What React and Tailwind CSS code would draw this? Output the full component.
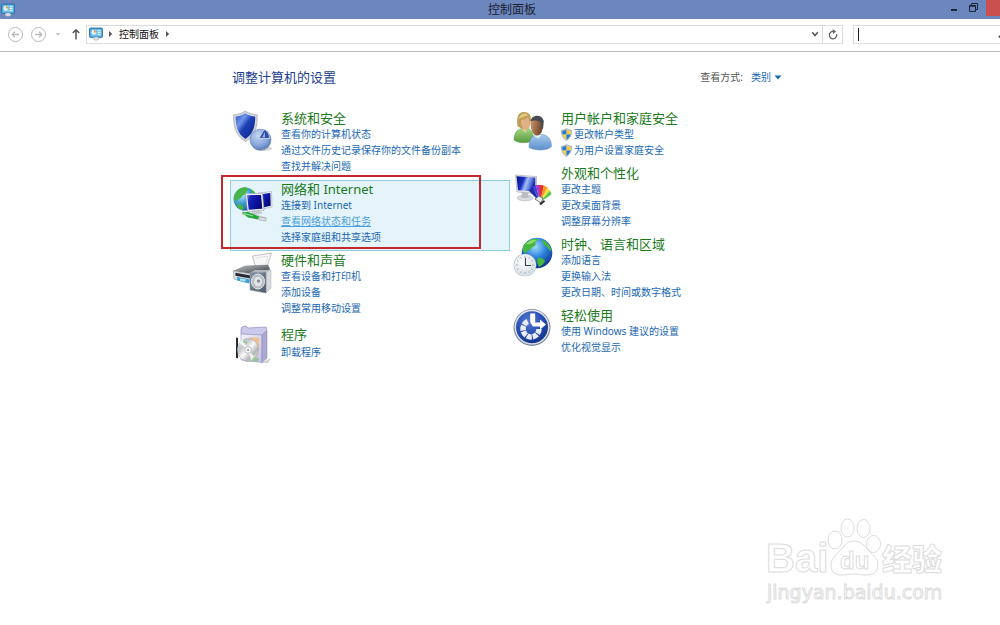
import React from "react";

function ControlPanelIcon({ className }) {
  return (
    <svg viewBox="0 0 14 14" className={className} aria-hidden="true">
      <rect x="0.5" y="1" width="13" height="9.5" rx="1" fill="#3f93cf" stroke="#2b6ea6" strokeWidth="0.8" />
      <rect x="1.5" y="2" width="11" height="7.5" fill="#6fc0ea" />
      <circle cx="4.8" cy="5.4" r="2.3" fill="#e8f6fd" />
      <path d="M4.8 5.4V3.1A2.3 2.3 0 0 1 7.1 5.4z" fill="#e9a13c" />
      <path d="M8.6 3.8h3M8.6 5.6h3M8.6 7.4h3" stroke="#fff" strokeWidth="0.9" />
      <path d="M4 11.5c0-1 1.500-1.500 3-1.500s3 .5 3 1.500-1.300 1.800-3 1.800-3-.8-3-1.800z" fill="#d8dde2" stroke="#9aa5af" strokeWidth="0.4" />
    </svg>
  );
}

function SecurityIcon() {
  return (
    <svg viewBox="0 0 40 42" className="h-[42px] w-10" aria-hidden="true">
      <defs>
        <linearGradient id="shieldFill" x1="0" y1="0" x2="1" y2="1">
          <stop offset="0" stopColor="#2a50c4" />
          <stop offset="0.3" stopColor="#6f95e8" />
          <stop offset="0.5" stopColor="#1c3fb4" />
          <stop offset="1" stopColor="#0d2488" />
        </linearGradient>
        <radialGradient id="pieFill" cx="0.4" cy="0.3" r="0.8">
          <stop offset="0" stopColor="#c5d8f4" />
          <stop offset="0.6" stopColor="#86a5da" />
          <stop offset="1" stopColor="#4c69a5" />
        </radialGradient>
      </defs>
      <path d="M12.400 1C9 3.500 5 4.500 0.700 4.800 0.300 15 2 25.500 12.500 31.500 23 25.500 24.500 15 24.200 4.800 20 4.500 15.500 3.500 12.400 1z" fill="#d4d8de" stroke="#9da4ae" strokeWidth="0.7" />
      <path d="M12.400 3.300C9.500 5.300 6 6.300 2.700 6.600 2.500 15 4.200 23.800 12.500 29 20.800 23.800 22.300 15 22.200 6.600 18.800 6.300 15 5.300 12.400 3.300z" fill="url(#shieldFill)" />
      <ellipse cx="30" cy="38.500" rx="9" ry="2.500" fill="#888" opacity="0.35" />
      <circle cx="27.500" cy="29.700" r="10.500" fill="url(#pieFill)" stroke="#5c78ae" strokeWidth="0.6" />
      <path d="M26 28.500L31 19.500c3.500 1 5.500 4.500 5.500 9z" fill="#2f50a4" stroke="#d3e0f6" strokeWidth="0.8" />
      <path d="M29 27.500l3-5.500v5.500z" fill="#96b2e2" />
    </svg>
  );
}

function NetworkIcon() {
  return (
    <svg viewBox="0 0 40 42" className="h-[42px] w-10" aria-hidden="true">
      <defs>
        <radialGradient id="netGlobe" cx="0.35" cy="0.3" r="0.8">
          <stop offset="0" stopColor="#b8ecfb" />
          <stop offset="0.5" stopColor="#3d9bd4" />
          <stop offset="1" stopColor="#12508f" />
        </radialGradient>
        <linearGradient id="netScreen" x1="0" y1="0" x2="1" y2="0.5">
          <stop offset="0" stopColor="#7d90e8" />
          <stop offset="0.25" stopColor="#1a26bc" />
          <stop offset="0.7" stopColor="#0a129c" />
          <stop offset="1" stopColor="#060a78" />
        </linearGradient>
      </defs>
      <circle cx="12" cy="18" r="11.500" fill="url(#netGlobe)" />
      <path d="M4 10c3-4 9-4.500 11-2.500 1 2-2 2-2 4s-3 2-4 4-4 2-5 4-3-1-3-3 1-4 3-6.500zM4 23c3-1 6 1 7 4-1 2-3 2.500-4 1.500-2-1-3-3-3-5.500zM17 8c3 1 5 3 6 5l-4-1z" fill="#49b546" />
      <path d="M25 12l13.500-1.500.5 15.500-11 2.500z" fill="#eceef2" stroke="#9ba2b0" strokeWidth="0.5" />
      <path d="M27 13.300l10.300-1.200.4 12.700-8.700 2z" fill="url(#netScreen)" />
      <path d="M12.500 12.500h17l1.500 17-16.500 1z" fill="#f1f3f6" stroke="#969eae" strokeWidth="0.6" />
      <path d="M14 14h14l1.300 13.800-13.500.9z" fill="url(#netScreen)" />
      <path d="M19 30.300l7-.4 3 2.300-9 .8z" fill="#c8ccd4" stroke="#9da3ad" strokeWidth="0.4" />
      <path d="M9 32l10 2 14 4.500" fill="none" stroke="#c7ccc9" strokeWidth="3.500" />
      <path d="M9 31.500l6-.5 11 4.500-1 3-10-2z" fill="#25a83a" />
      <path d="M11 32.500l9 2.500" stroke="#99eda0" strokeWidth="1" />
      <path d="M26 36l7 1v3l-7-1z" fill="#dce0e2" stroke="#8e9698" strokeWidth="0.5" />
    </svg>
  );
}

function HardwareIcon() {
  return (
    <svg viewBox="0 0 40 42" className="h-[42px] w-10" aria-hidden="true">
      <defs>
        <linearGradient id="printerTop" x1="0" y1="0" x2="1" y2="1">
          <stop offset="0" stopColor="#c6c9cd" />
          <stop offset="0.6" stopColor="#6b6e74" />
          <stop offset="1" stopColor="#3a3c42" />
        </linearGradient>
        <linearGradient id="speakerBody" x1="0" y1="0" x2="1" y2="1">
          <stop offset="0" stopColor="#8593a5" />
          <stop offset="1" stopColor="#4d5866" />
        </linearGradient>
      </defs>
      <path d="M19.500 4L38.500 1 34 15 23 16z" fill="#f7f7f7" stroke="#a9a9a9" strokeWidth="0.7" />
      <path d="M23 6l12-1.800-3 9" fill="none" stroke="#d8d8d8" strokeWidth="0.7" />
      <path d="M0.500 19L12 14l23-1 2 4.500L19 22z" fill="url(#printerTop)" stroke="#6f7278" strokeWidth="0.4" />
      <path d="M0.500 19L19 22v9L1 27z" fill="#dadde1" stroke="#8d9198" strokeWidth="0.5" />
      <path d="M2.500 20.800l15 2.700v3l-15-2.800z" fill="#272a30" />
      <path d="M4 25l13 2.500-1 4-12-3z" fill="#3ba3d8" />
      <path d="M7 26.500l6 1-1 2-5-1z" fill="#bce8ee" />
      <path d="M33 20l5-2v18l-5 5z" fill="#d6d9dd" stroke="#9b9fa5" strokeWidth="0.4" />
      <path d="M17 20.500l16-.5v21l-16-3z" fill="url(#speakerBody)" stroke="#8d96a2" strokeWidth="0.6" />
      <path d="M17 20.500l5-2.500h16l-5 2z" fill="#aeb5be" />
      <ellipse cx="25" cy="29.500" rx="6.500" ry="7.500" fill="#b7bdc5" stroke="#e6e9ec" strokeWidth="1" />
      <ellipse cx="25" cy="29.500" rx="4" ry="4.800" fill="#e0e3e7" />
      <circle cx="25.500" cy="29" r="1.600" fill="#7e8791" />
    </svg>
  );
}

function ProgramsIcon() {
  return (
    <svg viewBox="0 0 40 42" className="h-[42px] w-10" aria-hidden="true">
      <defs>
        <linearGradient id="boxFront" x1="0" y1="0" x2="1" y2="1">
          <stop offset="0" stopColor="#f3f2fc" />
          <stop offset="1" stopColor="#c3c1e2" />
        </linearGradient>
        <linearGradient id="discFill" x1="0" y1="0" x2="1" y2="1">
          <stop offset="0" stopColor="#f4f4f4" />
          <stop offset="0.3" stopColor="#c3c7ca" />
          <stop offset="0.5" stopColor="#fafafa" />
          <stop offset="0.7" stopColor="#b4b8b6" />
          <stop offset="1" stopColor="#e8eee4" />
        </linearGradient>
      </defs>
      <path d="M28 40l10-5-3 5z" fill="#777" opacity="0.35" />
      <path d="M8 6l1-2 4-1 2 2 18-1 1 4-5 4-21-1z" fill="#cccaea" stroke="#8f8dbd" strokeWidth="0.7" />
      <path d="M8 11l21 1v27.500L8 37z" fill="url(#boxFront)" stroke="#9997c2" strokeWidth="0.6" />
      <path d="M29 12l5-4v27l-5 4.500z" fill="#aba9d1" stroke="#8583b2" strokeWidth="0.5" />
      <path d="M17 14l9 1v11l-9-2z" fill="#f1c08b" />
      <path d="M3 14.500l2 .5v20.500l-2-.7z" fill="#25272b" />
      <ellipse cx="15" cy="27" rx="10.500" ry="11.500" fill="url(#discFill)" stroke="#a3a6a8" strokeWidth="0.6" />
      <path d="M15 27L6.500 20a11 11 0 0 1 3-3.500zM15 27l7.500 8a11 11 0 0 1-4 3z" fill="#fff" opacity="0.8" />
      <path d="M20 34l6 1-1 4-7-1zM9 19l4-2 1 4z" fill="#79bd72" opacity="0.6" />
      <circle cx="15" cy="27" r="3.300" fill="#fff" stroke="#a0a3a5" strokeWidth="0.7" />
      <circle cx="15" cy="27" r="1.200" fill="#a9adb0" />
    </svg>
  );
}

function UsersIcon() {
  return (
    <svg viewBox="0 0 40 42" className="h-[42px] w-10" aria-hidden="true">
      <defs>
        <linearGradient id="greenShirt" x1="0" y1="0" x2="0" y2="1">
          <stop offset="0" stopColor="#a6d67f" />
          <stop offset="1" stopColor="#579a3e" />
        </linearGradient>
        <linearGradient id="blueShirt" x1="0" y1="0" x2="0" y2="1">
          <stop offset="0" stopColor="#a8cbee" />
          <stop offset="1" stopColor="#5a8fca" />
        </linearGradient>
        <linearGradient id="manFace" x1="0" y1="0" x2="1" y2="0.3">
          <stop offset="0" stopColor="#d09a6c" />
          <stop offset="1" stopColor="#70452a" />
        </linearGradient>
      </defs>
      <path d="M1 30c0-7 3-10.500 8-11.500h6c3 1 5 4 5 7v5c-5 3-15 3-19-.5z" fill="url(#greenShirt)" stroke="#5b9645" strokeWidth="0.5" />
      <path d="M8.500 18h6l-2 5z" fill="#e9c39c" />
      <path d="M4.500 16C3.500 10 4 2 11 2c5 0 7 3 7 8l-2 8c-4 2-8 1-11.500-2z" fill="#bd9d55" />
      <path d="M5.500 9c1-5 6-7 10-4-3 1-6 3-10 4z" fill="#dec683" />
      <path d="M8 10c3 0 5-1 7-3 3 4 2 12-2 13-3 0-5.500-4-5-10z" fill="#e0b184" />
      <path d="M16 37.500c0-8 3-12 8-13h6c5 1 8.500 5 8.500 12-4 4.500-17 4.500-22.500 1z" fill="url(#blueShirt)" stroke="#648fbe" strokeWidth="0.5" />
      <path d="M21.500 24l7 .5-3 4-4-2z" fill="#e7eff7" />
      <path d="M17.500 13c0-6 12-7 12.500 0 .5 6-1.500 12.500-6 12.500-4 0-6.500-6.500-6.500-12.500z" fill="url(#manFace)" />
      <path d="M17.500 11C19 4.500 29 3.500 30.800 11l-.8 8-1.500-2-1-5c-3-1.500-6-2-10-1z" fill="#484c52" />
    </svg>
  );
}

function AppearanceIcon() {
  return (
    <svg viewBox="0 0 40 42" className="h-[42px] w-10" aria-hidden="true">
      <defs>
        <linearGradient id="deskScreen" x1="0" y1="0" x2="1" y2="0.3">
          <stop offset="0" stopColor="#08107f" />
          <stop offset="0.4" stopColor="#1730c6" />
          <stop offset="0.6" stopColor="#a9bdf6" />
          <stop offset="0.8" stopColor="#5f80e4" />
          <stop offset="1" stopColor="#1a2ba4" />
        </linearGradient>
      </defs>
      <ellipse cx="12" cy="33" rx="8" ry="2.800" fill="#d9dce0" stroke="#a5a9ae" strokeWidth="0.5" />
      <path d="M9 27h6l1 6H8z" fill="#b9bec4" />
      <path d="M2.500 10l21 1.500v17L4 27z" fill="#e6e8eb" stroke="#a0a4aa" strokeWidth="0.6" />
      <path d="M3.500 11.200l18.800 1.300v14L5 25.200z" fill="url(#deskScreen)" />
      <path d="M27 37L16 26l3.500-4z" fill="#202da8" />
      <path d="M27 37l-7.500-15 3.500-2z" fill="#4a43d8" />
      <path d="M27 37l-4-17h4z" fill="#b336c2" />
      <path d="M27 37V20l4 .5z" fill="#e8302d" />
      <path d="M27 37l4-16.500 3.500 2z" fill="#f59626" />
      <path d="M27 37l7.500-14.500 2.500 3z" fill="#f6e33b" />
      <path d="M27 37l10-11.500 1.500 4z" fill="#5bc548" />
      <path d="M22 34l4-3 4 2-2 5z" fill="#f0f0f0" stroke="#55585e" strokeWidth="0.8" />
      <path d="M26 39l5-4 1 1.500-4 3.500z" fill="#26282c" />
    </svg>
  );
}

function ClockIcon() {
  return (
    <svg viewBox="0 0 40 42" className="h-[42px] w-10" aria-hidden="true">
      <defs>
        <radialGradient id="clockGlobe" cx="0.45" cy="0.3" r="0.75">
          <stop offset="0" stopColor="#9edcff" />
          <stop offset="0.45" stopColor="#2e83dc" />
          <stop offset="1" stopColor="#0a2a83" />
        </radialGradient>
        <radialGradient id="dial" cx="0.4" cy="0.35" r="0.8">
          <stop offset="0" stopColor="#fff" />
          <stop offset="1" stopColor="#ccd7e0" />
        </radialGradient>
      </defs>
      <circle cx="24" cy="17" r="15.300" fill="url(#clockGlobe)" />
      <path d="M10 11c3-6 9-9 15-8 1 2-3 2-3 4 2 2-1 4-3 4-1 3-4 3-6 6-2 0-4-2-3-6zM29 3.500c5 2 9 7 9.500 12-3-1-3-4-5-5-3 0-3-3-4.500-7zM25 22c3-1 6 1 7 3-1 3-4 5-6 6-1-3-3-6-1-9z" fill="#48b83c" />
      <path d="M13 8c3-4 8-5 11-4-4 2-5 5-11 4z" fill="#a5e86f" opacity="0.8" />
      <circle cx="12" cy="29" r="11.300" fill="#a1acb6" />
      <circle cx="12" cy="29" r="10.500" fill="url(#dial)" stroke="#eef2f5" strokeWidth="0.8" />
      <path d="M12 20v2M12 36v2M3 29h2M19 29h2M7.500 21.200l.8 1.500M15.700 35.300l.8 1.500M16.500 21.200l-.8 1.500M8.300 35.300l-.8 1.500M4.200 24.500l1.500.8M18.300 32.700l1.500.8M19.800 24.500l-1.500.8M5.700 32.700l-1.500.8" stroke="#8794a1" strokeWidth="0.7" />
      <path d="M12.500 22v7.500H18" fill="none" stroke="#35414e" strokeWidth="1.100" />
    </svg>
  );
}

function EaseIcon() {
  return (
    <svg viewBox="0 0 40 42" className="h-[42px] w-10" aria-hidden="true">
      <defs>
        <radialGradient id="easeFill" cx="0.4" cy="0.3" r="0.8">
          <stop offset="0" stopColor="#5579d2" />
          <stop offset="0.6" stopColor="#2349ae" />
          <stop offset="1" stopColor="#122c7c" />
        </radialGradient>
      </defs>
      <circle cx="19" cy="20.500" r="18.500" fill="#7f899f" />
      <circle cx="19" cy="20.200" r="17.400" fill="#e3e7ee" />
      <circle cx="19" cy="20.200" r="16" fill="url(#easeFill)" />
      <path
        d="M26 22A8 8 0 1 1 15 14.500"
        fill="none"
        stroke="#e9effa"
        strokeWidth="5.500"
        strokeDasharray="4.800 1"
      />
      <path d="M17.200 6.500h5V15l-2.500 4.500-2.500-4.500z" fill="#fff" />
      <path d="M20.500 15.500h6.500V12.500l6 5-6 5v-3h-7z" fill="#fff" />
    </svg>
  );
}

function UacShield() {
  return (
    <svg viewBox="0 0 12 14" className="h-[13px] w-[11px] shrink-0" aria-hidden="true">
      <path d="M6 .4C4.500 1.700 2.500 2.200.5 2.200.3 7 1.500 11 6 13.600 10.500 11 11.700 7 11.500 2.200 9.500 2.200 7.500 1.700 6 .4z" fill="#c3cad2" stroke="#8c959e" strokeWidth="0.6" />
      <path d="M6 1.600C4.800 2.600 3 3.100 1.400 3.200c0 1.300 0 2.500.3 3.800H6z" fill="#2279d0" />
      <path d="M6 1.600c1.200 1 3 1.500 4.600 1.600 0 1.300 0 2.500-.3 3.800H6z" fill="#f7cf46" />
      <path d="M1.700 7H6v5.500C3.600 11.200 2.200 9.300 1.700 7z" fill="#f7cf46" />
      <path d="M10.300 7H6v5.500c2.400-1.300 3.800-3.200 4.300-5.500z" fill="#2279d0" />
    </svg>
  );
}

const leftGroups = [
  {
    title: "系统和安全",
    Icon: SecurityIcon,
    links: [{ text: "查看你的计算机状态" }, { text: "通过文件历史记录保存你的文件备份副本" }, { text: "查找并解决问题" }],
  },
  {
    title: "网络和 Internet",
    Icon: NetworkIcon,
    active: true,
    links: [{ text: "连接到 Internet" }, { text: "查看网络状态和任务", hovered: true }, { text: "选择家庭组和共享选项" }],
  },
  {
    title: "硬件和声音",
    Icon: HardwareIcon,
    links: [{ text: "查看设备和打印机" }, { text: "添加设备" }, { text: "调整常用移动设置" }],
  },
  { title: "程序", Icon: ProgramsIcon, short: true, links: [{ text: "卸载程序" }] },
];

const rightGroups = [
  {
    title: "用户帐户和家庭安全",
    Icon: UsersIcon,
    links: [
      { text: "更改帐户类型", shield: true },
      { text: "为用户设置家庭安全", shield: true },
    ],
  },
  {
    title: "外观和个性化",
    Icon: AppearanceIcon,
    links: [{ text: "更改主题" }, { text: "更改桌面背景" }, { text: "调整屏幕分辨率" }],
  },
  {
    title: "时钟、语言和区域",
    Icon: ClockIcon,
    links: [{ text: "添加语言" }, { text: "更换输入法" }, { text: "更改日期、时间或数字格式" }],
  },
  {
    title: "轻松使用",
    Icon: EaseIcon,
    links: [{ text: "使用 Windows 建议的设置" }, { text: "优化视觉显示" }],
  },
];

function Group({ group }) {
  const { title, Icon, links, active, short } = group;
  return (
    <section
      className={
        "relative flex items-start gap-2 border pb-1 pl-[2px] " +
        (active ? "border-[#8fcde3] bg-[#e5f3fa]" : "border-transparent")
      }
    >
      {/* The icon hangs over the row's padding so that two-link rows stay compact. */}
      <div className="-mb-4 shrink-0">
        <Icon />
      </div>
      <div className={"flex min-w-0 flex-col pb-px " + (short ? "gap-[2px] pt-[3px]" : "")}>
        <h2 className="text-[13px] leading-4 text-[#1a7a1a]">
          <a href="#">{title}</a>
        </h2>
        <ul className="text-[10px] leading-4">
          {links.map((l) => (
            <li key={l.text}>
              <a
                href="#"
                className={
                  "flex w-fit items-center gap-[2px] whitespace-nowrap " +
                  (l.hovered ? "text-[#4a9fdc] underline" : "text-[#1a68b4]")
                }
              >
                {l.shield && <UacShield />}
                {l.text}
              </a>
            </li>
          ))}
        </ul>
      </div>
      {active && (
        <div className="pointer-events-none absolute -left-[10px] -top-[6px] right-[28px] bottom-[1px] border-2 border-[#c2282d]" />
      )}
    </section>
  );
}

function Watermark() {
  return (
    <svg
      viewBox="0 0 190 96"
      className="pointer-events-none absolute bottom-[16px] right-[48px] h-24 w-[190px]"
      fill="#fff"
      stroke="#dcdcdc"
      strokeWidth="1"
      strokeLinejoin="round"
    >
      <text x="4" y="59" fontFamily="Liberation Sans, Arial, sans-serif" fontWeight="700" fontSize="40">
        Bai
      </text>
      <ellipse cx="73" cy="27" rx="7" ry="9" />
      <ellipse cx="85.500" cy="15" rx="6.500" ry="9" />
      <ellipse cx="101.500" cy="15.500" rx="6.500" ry="9" />
      <ellipse cx="111.500" cy="31" rx="7" ry="8.500" />
      <path d="M92 28c8 0 11 6 15 10 5 5 9 8 9 14 0 7-5 10-11 10-5 0-8-1-13-1s-8 1-13 1c-6 0-10-3-10-10 0-6 4-9 9-14 4-4 6-10 14-10z" />
      <text x="78" y="56" fontFamily="Liberation Sans, Arial, sans-serif" fontWeight="700" fontSize="24">
        du
      </text>
      <text x="120" y="57" fontFamily="Noto Sans CJK SC, sans-serif" fontWeight="900" fontSize="30">
        经验
      </text>
      <text x="5" y="86" fontFamily="DejaVu Sans, sans-serif" fontSize="19">
        jingyan.baidu.com
      </text>
    </svg>
  );
}

export default function App() {
  return (
    <div className="relative flex min-h-screen flex-col overflow-hidden bg-white font-['Noto_Sans','Noto_Sans_CJK_SC',sans-serif] text-[#222]">
      <header className="grid h-[19px] grid-cols-[1fr_auto_1fr] bg-[#6b87bd]">
        <div className="flex items-center pl-[1px]">
          <ControlPanelIcon className="size-[14px]" />
        </div>
        <h1 className="pl-6 text-xs leading-[19px] text-[#1c2233]">控制面板</h1>
        <div className="flex items-start justify-end gap-2">
          <button type="button" aria-label="最小化" className="mr-[3px] h-[18px] w-2">
            <svg viewBox="0 0 8 18" className="h-[18px] w-2">
              <path d="M1 10h6" stroke="#1b2438" strokeWidth="2" />
            </svg>
          </button>
          <button type="button" aria-label="还原" className="h-4 w-[9px]">
            <svg viewBox="0 0 9 16" className="h-4 w-[9px]" fill="none" stroke="#1b2438">
              <path d="M2.500 5.500v-2h6v6h-2" />
              <path d="M.5 5.500h6v6h-6z" />
              <path d="M.5 6h6" strokeWidth="1.500" />
            </svg>
          </button>
          <button type="button" aria-label="关闭" className="h-4 w-[14px] bg-[#c9504f]" />
        </div>
      </header>

      <nav className="flex h-[33px] items-center border-b border-[#bcbcbc] pb-[2px] pl-2">
        <button type="button" aria-label="后退" className="mr-2 size-[15px]">
          <svg viewBox="0 0 15 15" fill="none" stroke="#b9b9b9">
            <circle cx="7.500" cy="7.500" r="7" />
            <path d="M11 7.500H4.200M7 4.700L4.200 7.500 7 10.300" strokeWidth="1.300" />
          </svg>
        </button>
        <button type="button" aria-label="前进" className="mr-2 size-[15px]">
          <svg viewBox="0 0 15 15" fill="none" stroke="#b9b9b9">
            <circle cx="7.500" cy="7.500" r="7" />
            <path d="M4 7.500h6.800M8 4.700l2.800 2.800L8 10.300" strokeWidth="1.300" />
          </svg>
        </button>
        <button type="button" aria-label="最近位置" className="mr-[10px] h-3 w-2">
          <svg viewBox="0 0 8 12">
            <path d="M1.500 5h5L4 7.800z" fill="#c2c2c2" />
          </svg>
        </button>
        <button type="button" aria-label="上移" className="mr-[6px] h-3 w-2">
          <svg viewBox="0 0 8 12" fill="none" stroke="#555" strokeWidth="1.500">
            <path d="M4 11.500V2M.8 5L4 1.800 7.200 5" />
          </svg>
        </button>
        <div className="flex h-[19px] flex-1 items-center border border-[#dcdcdc] pl-[2px]">
          <ControlPanelIcon className="size-[14px]" />
          <svg viewBox="0 0 5 8" className="ml-[5px] h-2 w-[5px]">
            <path d="M1 1l3.200 3L1 7z" fill="#555" />
          </svg>
          <a href="#" className="mx-[6px] text-[10px] leading-4 text-[#111]">
            控制面板
          </a>
          <svg viewBox="0 0 5 8" className="h-2 w-[5px]">
            <path d="M1 1l3.200 3L1 7z" fill="#555" />
          </svg>
          <button type="button" aria-label="以前的位置" className="ml-auto flex h-full w-[14px] items-center justify-center">
            <svg viewBox="0 0 8 6" className="h-[6px] w-2" fill="none" stroke="#555" strokeWidth="1.500">
              <path d="M1.200 1.200L4 4.500l2.800-3.300" />
            </svg>
          </button>
          <button
            type="button"
            aria-label="刷新"
            className="flex h-full w-5 items-center justify-center border-l border-[#dcdcdc]"
          >
            <svg viewBox="0 0 10 11" className="h-[11px] w-[10px]" fill="none" stroke="#666" strokeWidth="1.300">
              <path d="M8.600 5.200a3.700 3.700 0 1 1-3-2.700" />
              <path d="M4.500.3l3.700 2-3 2.700z" fill="#666" stroke="none" />
            </svg>
          </button>
        </div>
        <div className="ml-[10px] flex h-[19px] w-[147px] items-center border border-r-0 border-[#dcdcdc] pl-1">
          <span className="h-[13px] w-px bg-[#222]" />
          <input type="text" aria-label="搜索控制面板" className="min-w-0 flex-1 px-1 text-[10px] leading-4 outline-none" />
          <svg viewBox="0 0 2 10" className="h-[10px] w-[2px]">
            <path d="M0 8l2-2v3z" fill="#555" />
          </svg>
        </div>
      </nav>

      <main className="flex-1 pl-[23%]">
        <div className="flex h-[57px] w-[552px] items-start justify-between pl-[2px] pt-[17px]">
          <h2 className="text-[13px] leading-4 text-[#1d3f8f]">调整计算机的设置</h2>
          <div className="flex items-center text-[10px] leading-4 text-[#555]">
            <label htmlFor="view-by">查看方式:</label>
            <select id="view-by" className="ml-2 appearance-none bg-transparent leading-4 text-[#1a68b4] outline-none">
              <option>类别</option>
            </select>
            <svg viewBox="0 0 8 5" className="ml-[3px] h-[5px] w-2">
              <path d="M.5.500h7L4 4.500z" fill="#1a68b4" />
            </svg>
          </div>
        </div>
        <div className="grid grid-cols-[280px_280px]">
          <div className="flex flex-col">
            {leftGroups.map((g) => (
              <Group key={g.title} group={g} />
            ))}
          </div>
          <div className="flex flex-col">
            {rightGroups.map((g) => (
              <Group key={g.title} group={g} />
            ))}
          </div>
        </div>
      </main>

      <Watermark />
    </div>
  );
}
